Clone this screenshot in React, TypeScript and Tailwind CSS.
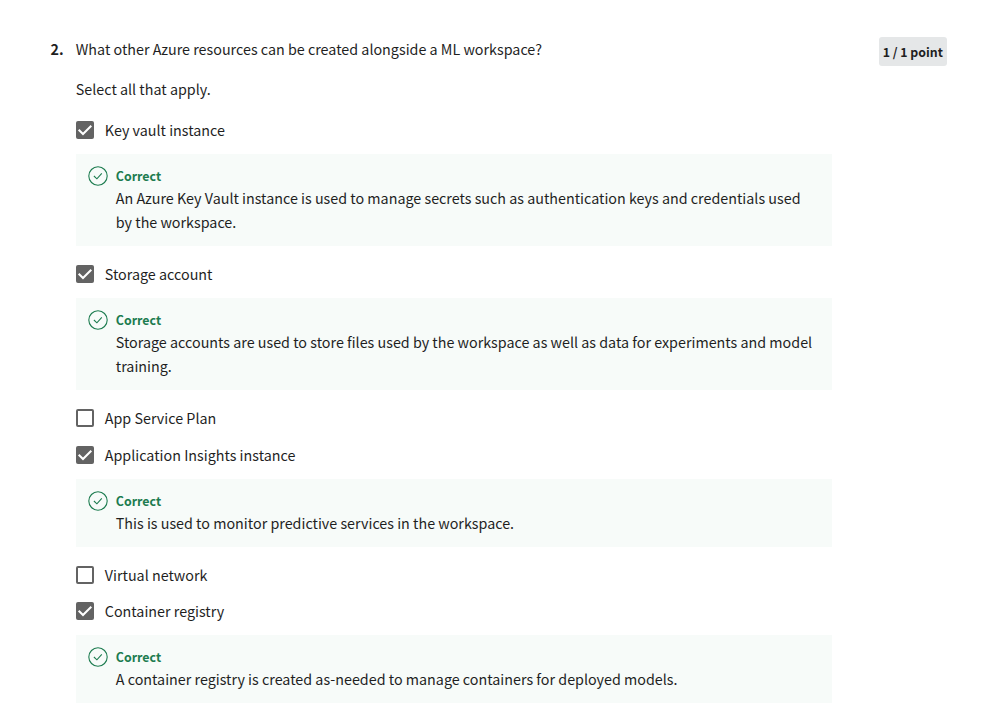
import React from "react";

const options = [
  { label: "Key vault instance", gap: "mt-[17px]", lines: ["An Azure Key Vault instance is used to manage secrets such as authentication keys and credentials used", "by the workspace."] },
  { label: "Storage account", gap: "mt-[16px]", lines: ["Storage accounts are used to store files used by the workspace as well as data for experiments and model", "training."] },
  { label: "App Service Plan", gap: "mt-[16px]" },
  { label: "Application Insights instance", gap: "mt-[13px]", lines: ["This is used to monitor predictive services in the workspace."] },
  { label: "Virtual network", gap: "mt-[16px]" },
  { label: "Container registry", gap: "mt-[12px]", lines: ["A container registry is created as-needed to manage containers for deployed models."] },
];

function Checkbox({ checked }: { checked: boolean }) {
  if (!checked) return <span className="block h-[18px] w-[18px] shrink-0 rounded-[2px] border-2 border-[#636363]" />;
  return (
    <span className="block h-[18px] w-[18px] shrink-0 rounded-[2px] bg-[#636363]">
      <svg viewBox="0 0 18 18" className="h-[18px] w-[18px]" fill="none" stroke="#fff" strokeWidth="2">
        <path d="M2.7 8.7 7 13 15.3 4.7" />
      </svg>
    </span>
  );
}

function Feedback({ lines }: { lines: string[] }) {
  return (
    <div className="mt-[12px] flex w-[756px] bg-[#f7fbf9] pt-[11px] pb-[12px] pl-3">
      <svg viewBox="0 0 20 20" className="mt-[1px] h-5 w-5 shrink-0" fill="none" stroke="#1d7c50">
        <circle cx="10" cy="10" r="9.2" strokeWidth="1.1" />
        <path d="M5.9 10 8.9 12.8 13.8 7.3" strokeWidth="1.1" />
      </svg>
      <div className="ml-2">
        <div className="h-[21px] text-[12.4px] leading-[22px] font-bold text-[#1d7c50]">Correct</div>
        {lines.map((line) => (
          <div key={line} className="h-6 leading-6 whitespace-nowrap">{line}</div>
        ))}
      </div>
    </div>
  );
}

export default function App() {
  return (
    <main className="flex h-[713px] w-[989px] overflow-hidden bg-white pt-[37px] pl-[50.6px] font-['Noto_Sans_CJK_SC',sans-serif] text-[14.325px] leading-6 text-[#1f1f1f]">
      <div className="w-[25.2px] shrink-0 font-bold">2.</div>
      <div className="w-[803px] shrink-0">
        <p>What other Azure resources can be created alongside a ML workspace?</p>
        <p className="mt-4">Select all that apply.</p>
        {options.map((o) => (
          <div key={o.label} className={o.gap}>
            <div className="flex h-6 items-center gap-[11px]">
              <Checkbox checked={!!o.lines} />
              <span className="whitespace-nowrap">{o.label}</span>
            </div>
            {o.lines && <Feedback lines={o.lines} />}
          </div>
        ))}
      </div>
      <div className="flex h-[29px] w-[68px] items-center justify-center rounded-[3px] bg-[#e5e7e8] text-[12.35px] font-bold whitespace-nowrap">1 / 1 point</div>
    </main>
  );
}
